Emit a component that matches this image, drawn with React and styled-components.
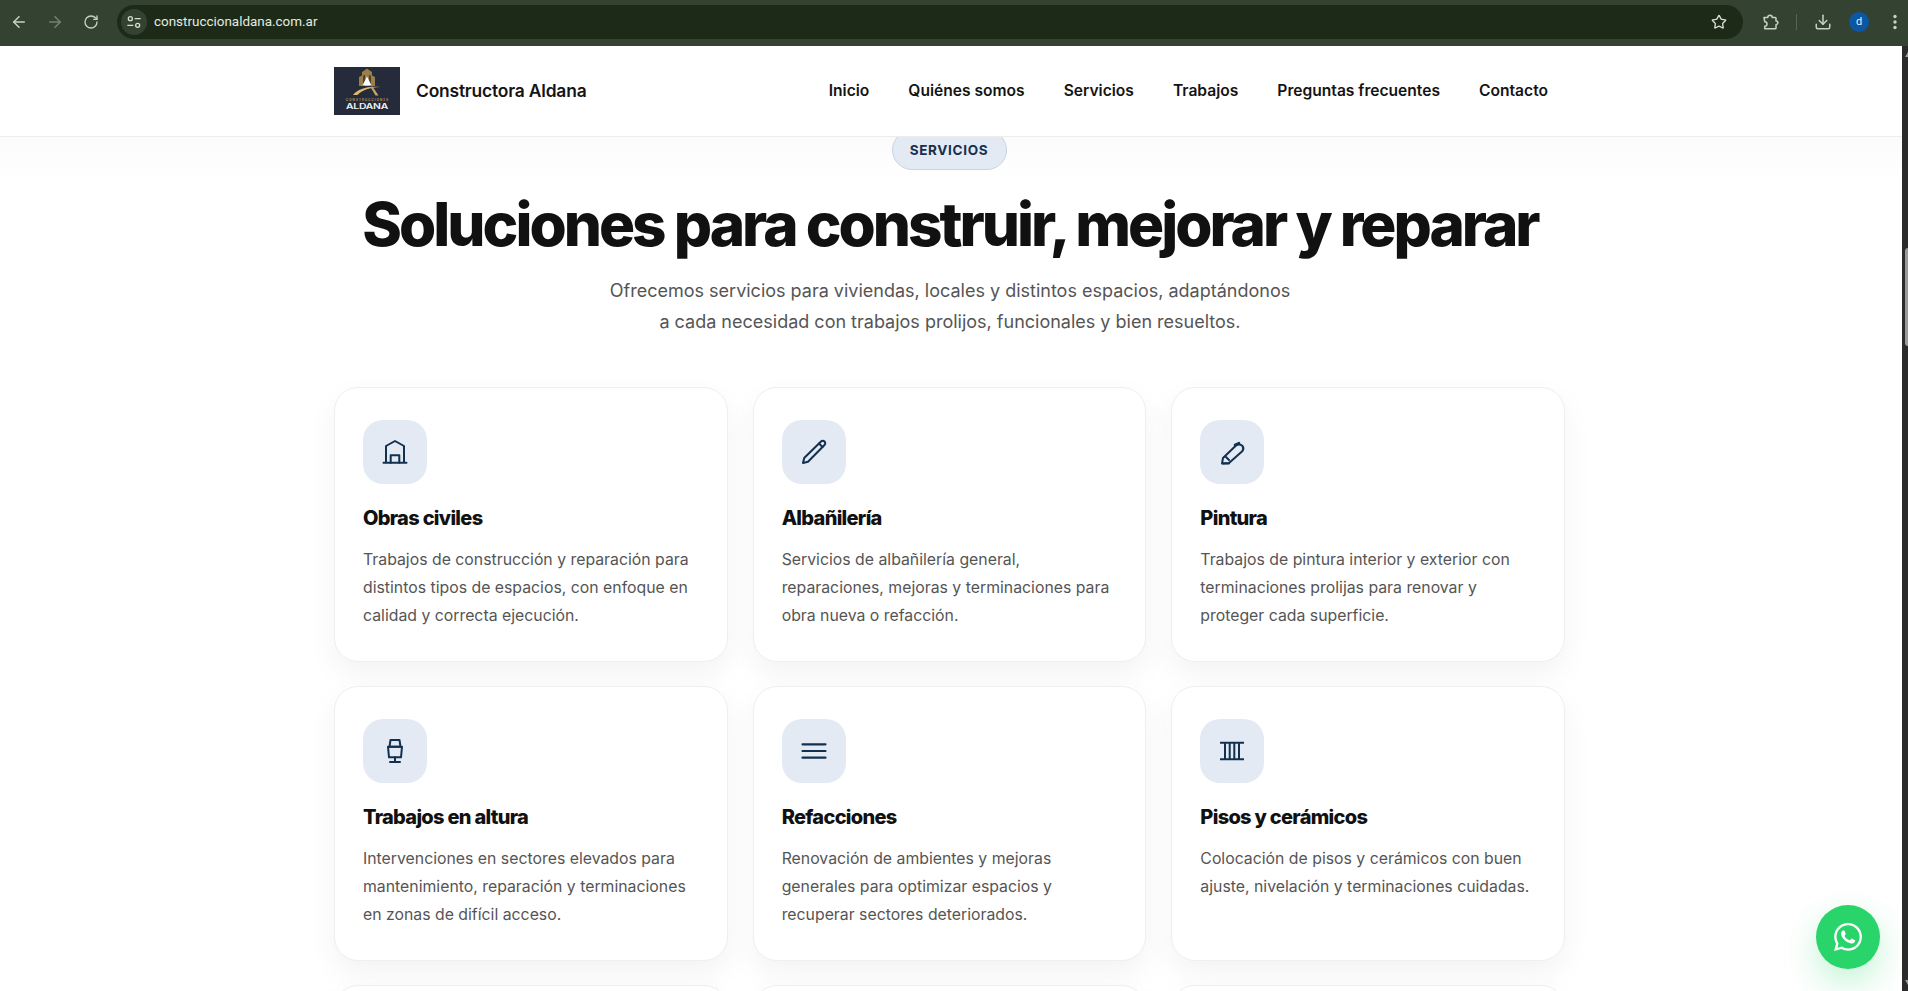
import React from "react";
import styled, { createGlobalStyle } from "styled-components";
import { ArrowLeft, ArrowRight, RotateCw, Star, Download } from "lucide-react";

const Global = createGlobalStyle`
  html, body { margin: 0; padding: 0; height: 100%; overflow: hidden; background: #fff; }
  * { box-sizing: border-box; }
  body { font-family: Inter, "Liberation Sans", sans-serif; color: #111; }
`;
const Viewport = styled.div`display:flex;flex-direction:column;width:1908px;height:991px;overflow:hidden;position:relative;`;
const BrowserBar = styled.div`flex:none;height:46px;background:#344331;display:flex;align-items:center;padding:0 4px 2px 1px;color:#c6d3c2;`;
const NavIcon = styled.span`display:flex;width:36px;justify-content:center;color:${p=>p.$dim?"#75836f":"#c6d3c2"};`;
const Omni = styled.div`flex:1;height:34px;margin:0 18px 0 8px;background:#1d2a18;border-radius:17px;display:flex;align-items:center;padding:0 16px 0 4px;`;
const SiteChip = styled.span`width:26px;height:26px;border-radius:50%;background:#344331;display:flex;align-items:center;justify-content:center;color:#d5dfd1;margin-right:7px;`;
const Url = styled.span`flex:1;font:13.45px/1 "Roboto","Liberation Sans",sans-serif;color:#e3ebe0;`;
const ToolIcon = styled.span`display:flex;color:#c6d3c2;margin-left:${p=>p.$ml||0}px;`;
const Sep = styled.span`width:1px;height:16px;background:#56664f;margin:0 17px;`;
const Avatar = styled.span`width:20px;height:20px;border-radius:50%;background:#0b57a4;color:#e8f0fe;font:11px/20px Roboto,sans-serif;text-align:center;margin-left:17px;`;

const Body = styled.div`flex:1;display:flex;min-height:0;`;
const Page = styled.div`flex:1;min-width:0;display:flex;flex-direction:column;overflow:hidden;position:relative;`;
const Scrollbar = styled.div`flex:none;width:6px;background:#2b2b2b;position:relative;`;
const Thumb = styled.div`position:absolute;left:3px;right:0;top:202px;height:98px;background:#9a9a9a;border-radius:3px 0 0 3px;`;
const ArrowMark = styled.div`position:absolute;left:3px;${p=>p.$down?"bottom:6px;border-top:5px solid #9a9a9a;":"top:6px;border-bottom:5px solid #9a9a9a;"}width:0;height:0;border-left:3px solid transparent;border-right:3px solid transparent;`;

const Header = styled.header`flex:none;height:91px;background:#fff;border-bottom:1px solid #ececec;position:relative;z-index:2;`;
const HeaderInner = styled.div`width:1232px;margin:0 0 0 334px;height:90px;display:flex;align-items:center;justify-content:space-between;padding-right:18px;`;
const Brand = styled.div`display:flex;align-items:center;gap:16px;font-size:17.4px;font-weight:600;color:#141414;letter-spacing:-.01em;`;
const BrandName = styled.span`margin-top:-2px;`;
const Logo = styled.div`width:66px;height:48px;background:#252b3b;display:block;`;
const Nav = styled.nav`display:flex;gap:39px;margin-top:-2px;font-size:15.6px;font-weight:600;color:#141414;`;

const Main = styled.main`margin-top:-8px;padding-right:2px;background:linear-gradient(#fafafa,#fff 50px);display:flex;flex-direction:column;align-items:center;`;
const Badge = styled.div`width:115px;height:40px;margin:1px 2px 0 0;border-radius:20px;background:#e4eaf4;border:1px solid #c9d4e2;color:#15304f;font-size:13.5px;font-weight:700;letter-spacing:.05em;display:flex;align-items:center;justify-content:center;`;
const Title = styled.h1`margin:19px 0 0;font-size:60.2px;line-height:72px;font-weight:800;letter-spacing:-.05em;color:#111;white-space:nowrap;`;
const Sub = styled.p`margin:14px 0 0;font-size:18px;line-height:31px;text-align:center;color:#555;`;
const Grid = styled.div`margin:50px 1px 0 0;width:1231px;display:grid;grid-template-columns:repeat(3,1fr);gap:24px 25px;`;
const Card = styled.article`height:275px;background:#fff;border:1px solid #efefef;border-radius:24px;padding:32px 28px;box-shadow:0 12px 30px rgba(0,0,0,.05);`;
const IconTile = styled.div`width:64px;height:64px;border-radius:20px;background:#e4eaf4;color:#12304f;display:flex;align-items:center;justify-content:center;`;
const CardTitle = styled.h3`margin:20px 0 0;font-size:20px;line-height:28px;font-weight:800;letter-spacing:-.035em;color:#111;`;
const CardText = styled.p`margin:14px 0 0;font-size:15.82px;line-height:28px;color:#555;`;
const Fab = styled.div`position:absolute;right:22px;bottom:22px;width:64px;height:64px;border-radius:50%;background:#29d46a;box-shadow:0 14px 34px rgba(37,211,102,.28);display:flex;align-items:center;justify-content:center;z-index:3;`;

const S = ({children}) => <svg width="28" height="28" viewBox="0 0 28 28" fill="none" stroke="currentColor" strokeWidth="2" strokeLinecap="round" strokeLinejoin="round">{children}</svg>;
const icons = {
  warehouse: <S><path d="M2.500 24.700h23M5 24.700V8l9-5 9 5v16.700"/><path d="M9.700 24.700v-7.400h8.600v7.400"/></S>,
  pencil: <S><path d="M3 25l1.200-5L21 3.500a2.400 2.400 0 0 1 3.500 3.500L8 23.800z"/><path d="M19 5.500l3.500 3.500"/></S>,
  brush: <S><path d="M4 25.500l1-5.500L18 7.500q3-2 6 0q2.500 2.500.5 5.500L11 25z"/><path d="M5 25.500h6M8 19l3 3"/><path d="M17 7l4-1.800" strokeWidth="2.600"/></S>,
  lamp: <S><path d="M9.500 3h9l1 6.700h-11z"/><path d="M7 9.700h14l-1 10.600H8z"/><path d="M14 20.300V25M9 25h10"/></S>,
  menu: <S><path d="M2.500 7.300h23M2.500 14h23M2.500 20.700h23" strokeWidth="2.200"/></S>,
  columns: <S><path d="M2 5.700h24M2 22.300h24M7 5.700v16.600M11.700 5.700v16.600M16.300 5.700v16.600M21 5.700v16.600" strokeLinecap="butt"/></S>,
};
const cards = [
  ["warehouse","Obras civiles",["Trabajos de construcción y reparación para","distintos tipos de espacios, con enfoque en","calidad y correcta ejecución."]],
  ["pencil","Albañilería",["Servicios de albañilería general,","reparaciones, mejoras y terminaciones para","obra nueva o refacción."]],
  ["brush","Pintura",["Trabajos de pintura interior y exterior con","terminaciones prolijas para renovar y","proteger cada superficie."]],
  ["lamp","Trabajos en altura",["Intervenciones en sectores elevados para","mantenimiento, reparación y terminaciones","en zonas de difícil acceso."]],
  ["menu","Refacciones",["Renovación de ambientes y mejoras","generales para optimizar espacios y","recuperar sectores deteriorados."]],
  ["columns","Pisos y cerámicos",["Colocación de pisos y cerámicos con buen","ajuste, nivelación y terminaciones cuidadas."]],
];
const links = ["Inicio","Quiénes somos","Servicios","Trabajos","Preguntas frecuentes","Contacto"];

const LogoArt = () => (
  <svg width="66" height="48" viewBox="0 0 66 48">
    <path d="M25 19V10l3-1.500V5l3-2 2-1.500 2 1.500 3 2v3.500l3 1.500v9z" fill="#9c7f46"/>
    <path d="M29 19V9l2-1.500V19zM35 19V7.500l2 1.500v10z" fill="#4a4238"/>
    <path d="M33 9.500l4.500 9h-9z" fill="#fff"/>
    <path d="M19 28C24 22 33 19 46 20 36 20.500 28 23 23.500 28z" fill="#dcb96b"/>
    <path d="M36.500 20l5 8.500h3L38.500 19.500z" fill="#c9a45c"/>
    <text x="33" y="33.500" textAnchor="middle" fontSize="2.900" textLength="42" lengthAdjust="spacing" fill="#c9a45c" fontFamily="Inter">CONSTRUCCIONES</text>
    <text x="33" y="41.500" textAnchor="middle" fontSize="7.500" fontWeight="600" textLength="42" lengthAdjust="spacingAndGlyphs" fill="#f2f2f2" fontFamily="Inter">ALDANA</text>
  </svg>
);

const Wa = () => (
  <svg width="28" height="28" viewBox="0 0 24 24" fill="#fff"><path d="M17.47 14.38c-.3-.15-1.76-.87-2.03-.97-.27-.1-.47-.15-.67.15-.2.3-.77.97-.94 1.16-.17.2-.35.22-.64.08-.3-.15-1.26-.46-2.39-1.48-.88-.79-1.48-1.76-1.65-2.06-.17-.3-.02-.46.13-.6.13-.13.3-.35.45-.52.15-.17.2-.3.3-.5.1-.2.05-.37-.02-.52-.08-.15-.67-1.61-.92-2.2-.24-.58-.49-.5-.67-.51h-.57c-.2 0-.52.07-.79.37-.27.3-1.04 1.02-1.04 2.48s1.06 2.88 1.21 3.07c.15.2 2.1 3.2 5.08 4.49.71.3 1.26.49 1.69.62.71.23 1.36.2 1.87.12.57-.08 1.76-.72 2-1.41.25-.7.25-1.29.17-1.41-.07-.13-.27-.2-.57-.35M12.05 21.79h-.01a9.87 9.87 0 0 1-5.03-1.38l-.36-.21-3.74.98 1-3.65-.24-.37a9.86 9.86 0 0 1-1.51-5.26c0-5.45 4.44-9.88 9.89-9.88 2.64 0 5.12 1.03 6.99 2.9a9.82 9.82 0 0 1 2.89 6.99c0 5.45-4.44 9.88-9.88 9.88M20.46 3.49A11.82 11.82 0 0 0 12.05 0C5.5 0 .16 5.34.16 11.89c0 2.1.55 4.14 1.59 5.95L.06 24l6.3-1.65a11.88 11.88 0 0 0 5.68 1.45h.01c6.55 0 11.89-5.34 11.89-11.9a11.82 11.82 0 0 0-3.48-8.41"/></svg>
);
const TuneIcon = () => (
  <svg width="16" height="16" viewBox="0 0 24 24" fill="none" stroke="currentColor" strokeWidth="2"><circle cx="6.500" cy="7" r="3"/><path d="M13 7h9M2 17h9"/><circle cx="17.500" cy="17" r="3"/></svg>
);
const ExtIcon = () => (
  <svg width="18" height="18" viewBox="0 0 24 24" fill="none" stroke="currentColor" strokeWidth="2" strokeLinejoin="round"><path d="M4 6h5a3 3 0 0 1 6 0h4a1 1 0 0 1 1 1v3.500a2.500 2.500 0 0 1 0 5V20a1 1 0 0 1-1 1H5v-3.500a3 3 0 0 0 0-6z"/></svg>
);
const DotsIcon = () => (
  <svg width="18" height="18" viewBox="0 0 18 18" fill="currentColor"><circle cx="9" cy="3.500" r="1.700"/><circle cx="9" cy="9" r="1.700"/><circle cx="9" cy="14.500" r="1.700"/></svg>
);

export default function App() {
  return (
    <Viewport>
      <Global />
      <BrowserBar>
        <NavIcon><ArrowLeft size={18}/></NavIcon>
        <NavIcon $dim><ArrowRight size={18}/></NavIcon>
        <NavIcon><RotateCw size={16}/></NavIcon>
        <Omni>
          <SiteChip><TuneIcon/></SiteChip>
          <Url>construccionaldana.com.ar</Url>
          <Star size={16} color="#d5dfd1"/>
        </Omni>
        <ToolIcon><ExtIcon/></ToolIcon>
        <Sep/>
        <ToolIcon><Download size={18}/></ToolIcon>
        <Avatar>d</Avatar>
        <ToolIcon $ml={17}><DotsIcon/></ToolIcon>
      </BrowserBar>
      <Body>
        <Page>
          <Header>
            <HeaderInner>
              <Brand><Logo><LogoArt/></Logo><BrandName>Constructora Aldana</BrandName></Brand>
              <Nav>{links.map(l=><span key={l}>{l}</span>)}</Nav>
            </HeaderInner>
          </Header>
          <Main>
            <Badge>SERVICIOS</Badge>
            <Title>Soluciones para construir, mejorar y reparar</Title>
            <Sub>Ofrecemos servicios para viviendas, locales y distintos espacios, adaptándonos<br/>a cada necesidad con trabajos prolijos, funcionales y bien resueltos.</Sub>
            <Grid>
              {cards.map(([ic,t,ls])=>(
                <Card key={t}>
                  <IconTile>{icons[ic]}</IconTile>
                  <CardTitle>{t}</CardTitle>
                  <CardText>{ls.map((x,i)=><React.Fragment key={i}>{x}<br/></React.Fragment>)}</CardText>
                </Card>
              ))}
              <Card/><Card/><Card/>
            </Grid>
          </Main>
          <Fab><Wa/></Fab>
        </Page>
        <Scrollbar><ArrowMark/><Thumb/><ArrowMark $down/></Scrollbar>
      </Body>
    </Viewport>
  );
}
